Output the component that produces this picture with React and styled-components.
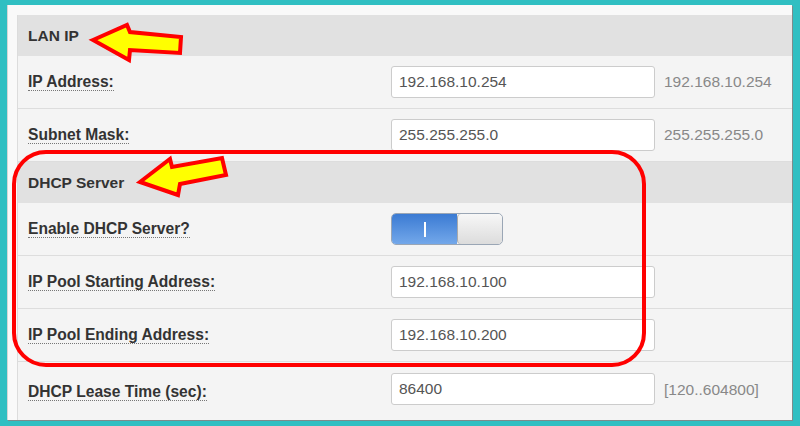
import React from "react";
import styled, { createGlobalStyle } from "styled-components";

const GlobalStyle = createGlobalStyle`
  html, body {
    margin: 0;
    padding: 0;
    background: #30bfc2;
  }
  body {
    font-family: "Liberation Sans", Arial, sans-serif;
  }
`;

const Page = styled.div`
  position: relative;
  width: 800px;
  height: 426px;
  box-sizing: border-box;
  padding: 5px 8px 6px 7px;
  background: #30bfc2;
  overflow: hidden;
`;

const Panel = styled.div`
  height: 100%;
  box-sizing: border-box;
  padding: 10px 0 0 9px;
  background: #f9f9f9;
  border-left: 1px solid #d6d6d6;
  box-shadow: 1px 1px 0 #7c8c8c;
  overflow: hidden;
`;

const Table = styled.div`
  height: 100%;
  background: #f4f4f4;
  border-left: 1px solid #dcdcdc;
  display: flex;
  flex-direction: column;
`;

const Header = styled.div`
  height: 41px;
  flex: none;
  display: flex;
  align-items: center;
  padding-left: 10px;
  background: #e1e1e1;
  color: #333;
  font-size: 15.5px;
  font-weight: bold;
`;

const Row = styled.div`
  height: ${(p) => (p.$last ? "auto" : "53px")};
  flex: ${(p) => (p.$last ? "1" : "none")};
  box-sizing: border-box;
  display: grid;
  grid-template-columns: 363px 264px auto;
  align-items: ${(p) => (p.$last ? "start" : "center")};
  padding: ${(p) => (p.$last ? "11px 0 0 10px" : "0 0 0 10px")};
  border-bottom: ${(p) => (p.$last ? "none" : "1px solid #dddddd")};
`;

const Label = styled.span`
  justify-self: start;
  color: #333;
  font-size: 15.6px;
  font-weight: bold;
  line-height: 17px;
  border-bottom: 1px dotted #777;
  margin-top: ${(p) => (p.$last ? "10px" : "0")};
`;

const Input = styled.input`
  width: 264px;
  height: 32px;
  box-sizing: border-box;
  padding: 0 7px;
  border: 1px solid #cccccc;
  border-radius: 3px;
  background: #fff;
  color: #555;
  font-family: "Liberation Sans", Arial, sans-serif;
  font-size: 15.5px;
  outline: none;
`;

const Help = styled.span`
  padding-left: 9px;
  color: #888;
  font-size: 15.5px;
  padding-top: ${(p) => (p.$last ? "8px" : "0")};
`;

const Toggle = styled.div`
  width: 112px;
  height: 32px;
  box-sizing: border-box;
  display: flex;
  border: 1px solid #9aa6b5;
  border-radius: 5px;
  overflow: hidden;
`;

const ToggleOn = styled.div`
  width: 65px;
  display: flex;
  align-items: center;
  justify-content: center;
  background: linear-gradient(#3b7bd3, #73a8ea);
  &::after {
    content: "";
    width: 2px;
    height: 15px;
    background: #fff;
  }
`;

const ToggleKnob = styled.div`
  flex: 1;
  background: linear-gradient(#f7f7f7, #dcdcdc);
  border-left: 1px solid #a9a9a9;
  border-radius: 4px;
`;

const Overlay = styled.svg`
  position: absolute;
  top: 0;
  left: 0;
  pointer-events: none;
`;

const field = (label, value, help) => ({ label, value, help });

function FieldRow({ label, value, help, last }) {
  return (
    <Row $last={last}>
      <Label $last={last}>{label}</Label>
      <Input defaultValue={value} />
      {help && <Help $last={last}>{help}</Help>}
    </Row>
  );
}

export default function App() {
  const lan = [
    field("IP Address:", "192.168.10.254", "192.168.10.254"),
    field("Subnet Mask:", "255.255.255.0", "255.255.255.0"),
  ];
  const pool = [
    field("IP Pool Starting Address:", "192.168.10.100"),
    field("IP Pool Ending Address:", "192.168.10.200"),
  ];

  return (
    <Page>
      <GlobalStyle />
      <Panel>
        <Table>
          <Header>LAN IP</Header>
          {lan.map((f) => (
            <FieldRow key={f.label} {...f} />
          ))}
          <Header>DHCP Server</Header>
          <Row>
            <Label>Enable DHCP Server?</Label>
            <Toggle>
              <ToggleOn />
              <ToggleKnob />
            </Toggle>
          </Row>
          {pool.map((f) => (
            <FieldRow key={f.label} {...f} />
          ))}
          <FieldRow
            last
            label="DHCP Lease Time (sec):"
            value="86400"
            help="[120..604800]"
          />
        </Table>
      </Panel>

      {/* annotations drawn over the screenshot */}
      <Overlay width="800" height="426" viewBox="0 0 800 426">
        <rect x="14" y="152" width="630" height="213" rx="32" fill="none" stroke="#ff0000" strokeWidth="4" />
        <polygon
          points="93,40 127,25 130,32 181,37 180,53 130,50 129,60"
          fill="#ffff00"
          stroke="#ff0000"
          strokeWidth="4"
          strokeLinejoin="miter"
        />
        <polygon
          points="140,182 170,159 172,167 222,158 226,175 180,184 178,195"
          fill="#ffff00"
          stroke="#ff0000"
          strokeWidth="4"
          strokeLinejoin="miter"
        />
      </Overlay>
    </Page>
  );
}
